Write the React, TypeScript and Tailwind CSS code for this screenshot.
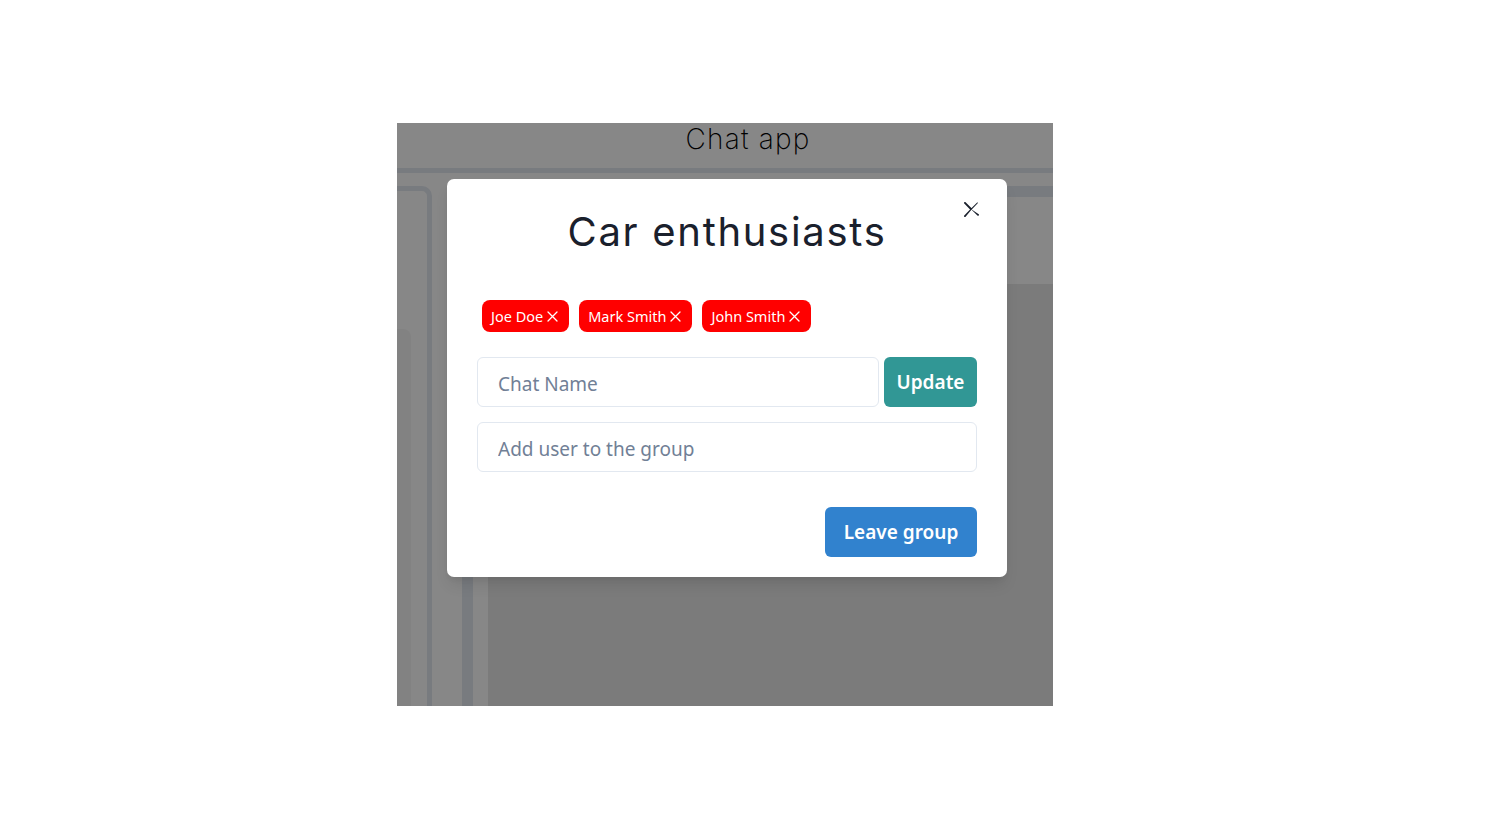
import React from "react";

const body = { fontFamily: '"Noto Sans", "Open Sans", sans-serif' };
const heading = { fontFamily: 'Inter, "DejaVu Sans", sans-serif' };

function SmallX() {
  return (
    <svg width="11" height="11" viewBox="0 0 11 11" fill="none" stroke="white" strokeWidth="1.3" strokeLinecap="round">
      <path d="M1 1 L10 10 M10 1 L1 10" />
    </svg>
  );
}

function Badge({ name }: { name: string }) {
  return (
    <div className="h-[32px] pl-[9px] pr-[11px] pt-[1px] rounded-[8px] bg-[#ff0000] text-white text-[14.5px] flex items-center gap-[4px]">
      <span>{name}</span>
      <SmallX />
    </div>
  );
}

export default function App() {
  return (
    <div className="min-h-screen bg-white pt-[123px] pl-[397px]" style={body}>
      <div className="relative w-[656px] h-[583px] overflow-hidden bg-white">
        <div className="flex flex-col h-full">
          <header className="h-[50px] shrink-0 border-b-[5px] border-[#e2e8f0] flex justify-center pl-[46px]">
            <span className="text-[28px] leading-[32px] font-extralight text-black tracking-[1.2px]" style={heading}>
              Chat app
            </span>
          </header>
          <div className="flex flex-1 pt-[13px] min-h-0">
            <div className="w-[35px] shrink-0 border-t-[5px] border-r-[5px] border-[#e2e8f0] rounded-tr-[10px] bg-white pt-[138px]">
              <div className="w-[14px] h-full rounded-tr-[8px] bg-[#f6f6f6]" />
            </div>
            <div className="ml-[30px] w-[700px] shrink-0 border-t-[11px] border-l-[11px] border-[#e2e8f0] rounded-tl-[12px] bg-white pl-[15px] flex flex-col">
              <div className="h-[87px] shrink-0" />
              <div className="flex-1 bg-[#e8e8e8] rounded-tl-[8px]" />
            </div>
          </div>
        </div>

        <div className="absolute inset-0 bg-black/[0.47] flex justify-center items-start pt-[56px] pl-[4px]">
          <div className="relative w-[560px] bg-white rounded-[7px] shadow-[0_10px_15px_-3px_rgba(0,0,0,0.1),0_4px_6px_-2px_rgba(0,0,0,0.05)] pt-[29px]">
            <button className="absolute top-[14px] right-[20px] w-[32px] h-[32px] flex items-center justify-center">
              <svg width="15" height="15" viewBox="0 0 24 24" fill="#1a202c">
                <path d="M.439,21.44a1.5,1.5,0,0,0,2.122,2.121L11.823,12.3a.25.25,0,0,1,.354,0l9.262,9.263a1.5,1.5,0,1,0,2.122-2.121L12.3,12.177a.25.25,0,0,1,0-.354l9.263-9.262A1.5,1.5,0,0,0,21.439.44L12.177,9.7a.25.25,0,0,1-.354,0L2.561.44A1.5,1.5,0,0,0,.439,2.561L9.7,11.823a.25.25,0,0,1,0,.354Z" />
              </svg>
            </button>
            <h2 className="text-center text-[40px] leading-[48px] text-[#1a202c] tracking-[1.7px]" style={heading}>
              Car enthusiasts
            </h2>
            <div className="px-[30px] pt-[44px]">
              <div className="flex gap-[10px] pl-[5px]">
                <Badge name="Joe Doe" />
                <Badge name="Mark Smith" />
                <Badge name="John Smith" />
              </div>
              <div className="flex gap-[5px] mt-[25px]">
                <input
                  className="flex-1 h-[50px] border border-[#e2e8f0] rounded-[6px] pl-[20px] pt-[3px] text-[19px] outline-none placeholder:text-[#718096]"
                  placeholder="Chat Name"
                />
                <button className="w-[93px] h-[50px] rounded-[6px] bg-[#319795] text-white text-[19px] font-semibold pt-[1px]">
                  Update
                </button>
              </div>
              <input
                className="mt-[15px] w-full h-[50px] border border-[#e2e8f0] rounded-[6px] pl-[20px] pt-[3px] text-[19px] outline-none placeholder:text-[#718096]"
                placeholder="Add user to the group"
              />
              <div className="flex justify-end pt-[35px] pb-[20px]">
                <button className="w-[152px] h-[50px] rounded-[6px] bg-[#3182ce] text-white text-[19px] font-semibold pt-[1px]">
                  Leave group
                </button>
              </div>
            </div>
          </div>
        </div>
      </div>
    </div>
  );
}
